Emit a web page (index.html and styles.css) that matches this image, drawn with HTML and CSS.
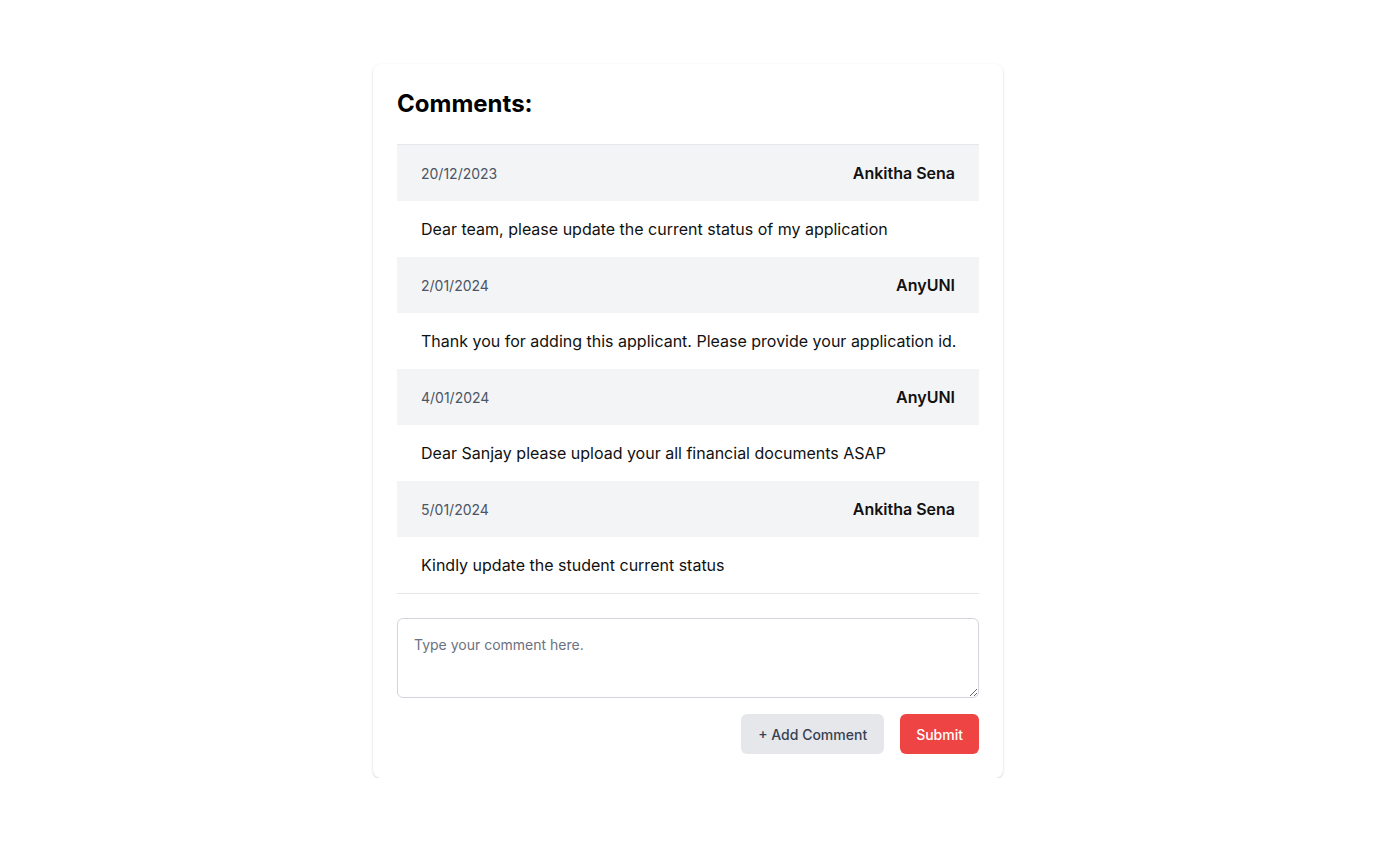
FILE: index.html
```html
<!DOCTYPE html>
<html lang="en">
<head>
<meta charset="utf-8">
<title>Comments</title>
<link rel="stylesheet" href="styles.css">
</head>
<body>
<main class="page">
  <section class="card">
    <h2 class="title">Comments:</h2>
    <div class="list">
      <div class="head"><span class="date">20/12/2023</span><span class="author">Ankitha Sena</span></div>
      <div class="text">Dear team, please update the current status of my application</div>
      <div class="head"><span class="date">2/01/2024</span><span class="author">AnyUNI</span></div>
      <div class="text">Thank you for adding this applicant. Please provide your application id.</div>
      <div class="head"><span class="date">4/01/2024</span><span class="author">AnyUNI</span></div>
      <div class="text">Dear Sanjay please upload your all financial documents ASAP</div>
      <div class="head"><span class="date">5/01/2024</span><span class="author">Ankitha Sena</span></div>
      <div class="text">Kindly update the student current status</div>
    </div>
    <textarea class="input" placeholder="Type your comment here."></textarea>
    <div class="actions">
      <button class="btn btn-grey">+ Add Comment</button>
      <button class="btn btn-red">Submit</button>
    </div>
  </section>
</main>
</body>
</html>
```

FILE: styles.css
```css
* { box-sizing: border-box; }
html, body { margin: 0; padding: 0; background: #ffffff; }
body { font-family: Inter, "Noto Sans", sans-serif; color: #111827; }
.page { display: flex; justify-content: center; padding-top: 64px; }
.card {
  width: 630px;
  background: #fff;
  border-radius: 8px;
  box-shadow: 0 1px 3px rgba(0,0,0,0.12), 0 1px 2px rgba(0,0,0,0.07);
  padding: 24px;
}
.title {
  margin: 0 0 24px;
  font-size: 24px;
  line-height: 32px;
  font-weight: 700;
  color: #000;
}
.list {
  border-top: 1px solid #e5e7eb;
  border-bottom: 1px solid #e5e7eb;
}
.head {
  height: 56px;
  background: #f3f4f6;
  display: flex;
  align-items: center;
  justify-content: space-between;
  padding: 0 24px;
}
.date { font-size: 14px; color: #4b5563; }
.author { font-size: 16px; font-weight: 600; color: #111; }
.text {
  height: 56px;
  display: flex;
  align-items: center;
  padding: 0 24px;
  font-size: 16px;
  color: #111;
  white-space: nowrap;
}
.input {
  display: block;
  width: 100%;
  height: 80px;
  margin-top: 24px;
  border: 1px solid #d1d5db;
  border-radius: 6px;
  padding: 16px;
  font-family: Inter, sans-serif;
  font-size: 14px;
  line-height: 20px;
  color: #111;
  resize: vertical;
  outline: none;
}
.input::placeholder { color: #6b7280; }
.actions {
  display: flex;
  justify-content: flex-end;
  gap: 16px;
  margin-top: 16px;
}
.btn {
  height: 40px;
  padding: 0 16px;
  border: none;
  border-radius: 6px;
  font-family: Inter, sans-serif;
  font-size: 14px;
  font-weight: 500;
  cursor: pointer;
}
.btn-grey { background: #e5e7eb; color: #374151; padding: 0 17px; }
.btn-red { background: #ef4444; color: #fff; }
```
